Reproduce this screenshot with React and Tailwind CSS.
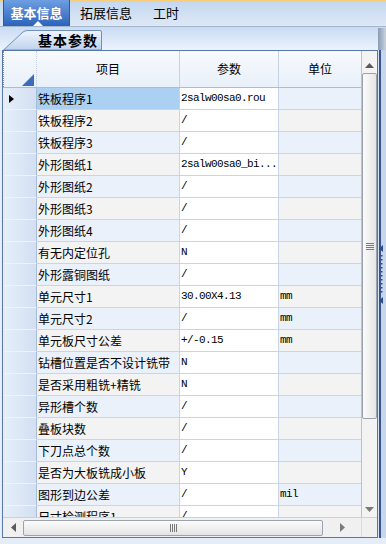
import React from "react";

const rows = [
  ["铁板程序1", "2salw00sa0.rou", ""],
  ["铁板程序2", "/", ""],
  ["铁板程序3", "/", ""],
  ["外形图纸1", "2salw00sa0_bi...", ""],
  ["外形图纸2", "/", ""],
  ["外形图纸3", "/", ""],
  ["外形图纸4", "/", ""],
  ["有无内定位孔", "N", ""],
  ["外形露铜图纸", "/", ""],
  ["单元尺寸1", "30.00X4.13", "mm"],
  ["单元尺寸2", "/", "mm"],
  ["单元板尺寸公差", "+/-0.15", "mm"],
  ["钻槽位置是否不设计铣带", "N", ""],
  ["是否采用粗铣+精铣", "N", ""],
  ["异形槽个数", "/", ""],
  ["叠板块数", "/", ""],
  ["下刀点总个数", "/", ""],
  ["是否为大板铣成小板", "Y", ""],
  ["图形到边公差", "/", "mil"],
  ["尺寸检测程序1", "/", ""],
];

const cjk = { fontFamily: '"Noto Sans CJK SC", "Noto Sans", sans-serif' };
const mono = { fontFamily: '"Liberation Mono", "Noto Sans CJK SC", monospace' };

export default function App() {
  return (
    <div
      className="w-[386px] h-[544px] bg-[#e4edf8] overflow-hidden flex flex-col text-[12px] text-black"
      style={cjk}
    >
      {/* Top tab bar */}
      <div className="h-[27px] flex items-stretch bg-gradient-to-b from-[#c3d7f0] to-[#dde8f5] border-b border-[#a3b6cd] relative">
        <div className="absolute left-0 right-0 top-0 h-[2px] bg-[#f7cf7c]" />
        <div className="relative ml-[3px] w-[67px] flex items-center justify-center bg-gradient-to-b from-[#6e9fe2] to-[#2c63b9] text-white font-bold text-[13px] border-x border-[#2a5aa8] z-10">
          基本信息
          <div className="absolute bottom-0 left-[29px] w-0 h-0 border-l-[5px] border-r-[5px] border-b-[5px] border-l-transparent border-r-transparent border-b-white" />
        </div>
        <div className="ml-[10px] flex items-center text-[13px]">拓展信息</div>
        <div className="ml-[21px] flex items-center text-[13px]">工时</div>
      </div>

      {/* Sub tab bar */}
      <div className="h-[23px] bg-gradient-to-b from-[#c9dbf3] to-[#ecf3fd] flex items-end relative">
        <div className="relative ml-[3px] w-[99px] h-[20px] flex items-center justify-end pr-[3px]">
          <svg className="absolute inset-0" width="99" height="20" viewBox="0 0 99 20">
            <defs>
              <linearGradient id="st" x1="0" y1="0" x2="0" y2="1">
                <stop offset="0" stopColor="#eef4fc" />
                <stop offset="1" stopColor="#bfd3ee" />
              </linearGradient>
            </defs>
            <path d="M0.5 20 L20 2 Q22 0.5 25 0.5 L97 0.5 Q98.5 0.5 98.5 2 L98.5 20 Z" fill="url(#st)" stroke="#6f8fbd" strokeWidth="1" />
          </svg>
          <span className="relative font-bold text-[14px] tracking-[1px] mr-[1px]">基本参数</span>
        </div>
        <div className="absolute right-0 top-[1px] bottom-0 w-[8px] bg-gradient-to-r from-[#8c9cb2] to-[#c9d3df]" />
      </div>

      {/* Grid + splitter */}
      <div className="flex h-[488px]">
        <div className="ml-[2px] w-[376px] border border-[#5677a8] flex flex-col bg-white">
          <div className="flex h-[466px]">
            {/* Table area */}
            <div className="w-[358px] overflow-hidden flex flex-col">
              {/* Header */}
              <div className="flex h-[37px] shrink-0 border-b border-[#a9bdd8] bg-gradient-to-b from-[#f7fafd] to-[#e9f0f9]">
                <div className="relative w-[34px] border-r border-[#c3d2e6] border-l border-l-[#7d8fa8] border-dotted">
                  <div className="absolute right-[2px] bottom-[1px] w-0 h-0 border-l-[11px] border-t-[11px] border-l-transparent border-t-transparent border-b-0 border-r-0" />
                  <svg className="absolute right-[2px] bottom-[1px]" width="12" height="12" viewBox="0 0 12 12">
                    <polygon points="12,0 12,12 0,12" fill="#3c6cbb" />
                  </svg>
                </div>
                <div className="w-[143px] border-r border-[#c3d2e6] flex items-center justify-center">项目</div>
                <div className="w-[99px] border-r border-[#c3d2e6] flex items-center justify-center">参数</div>
                <div className="w-[82px] flex items-center justify-center">单位</div>
              </div>
              {/* Rows */}
              {rows.map((r, i) => {
                const blue = i % 2 === 0;
                const sel = i === 0;
                return (
                  <div key={i} className="flex h-[22px] shrink-0">
                    <div className="relative w-[34px] shrink-0 border-b border-[#eef3fa] border-r border-r-[#a7bcd9] bg-gradient-to-r from-[#e6eef9] to-[#d3e0f2]">
                      {sel && (
                        <svg className="absolute left-[6px] top-[7px]" width="5" height="8" viewBox="0 0 5 8">
                          <polygon points="0,0 5,4 0,8" fill="#000" />
                        </svg>
                      )}
                    </div>
                    <div
                      className={`w-[143px] shrink-0 border-b border-r border-[#c6d5ea] flex items-center pl-[1px] whitespace-nowrap overflow-hidden ${
                        sel ? "bg-[#acd0f2]" : blue ? "bg-[#eaf1fb]" : "bg-[#f3f3f3]"
                      }`}
                    >
                      {r[0]}
                    </div>
                    <div
                      className="w-[99px] shrink-0 border-b border-r border-[#c6d5ea] bg-white flex items-center pl-[1px] whitespace-nowrap overflow-hidden text-[11px] tracking-[-0.6px]"
                      style={mono}
                    >
                      {r[1]}
                    </div>
                    <div
                      className={`w-[82px] shrink-0 border-b border-[#c6d5ea] flex items-center pl-[1px] text-[11px] tracking-[-0.6px] ${
                        blue ? "bg-[#eaf1fb]" : "bg-[#f3f3f3]"
                      }`}
                      style={mono}
                    >
                      {r[2]}
                    </div>
                  </div>
                );
              })}
            </div>
            {/* Vertical scrollbar */}
            <div className="w-[16px] border-l border-[#b8c3cf] bg-[#f3f3f3] flex flex-col items-stretch">
              <div className="h-[22px] flex items-end justify-center pb-[5px]">
                <svg width="9" height="5" viewBox="0 0 9 5">
                  <polygon points="4.5,0 9,5 0,5" fill="#5a5a5a" />
                </svg>
              </div>
              <div className="h-[346px] mx-[0px] border border-[#9aa3ad] rounded-[2px] bg-gradient-to-r from-[#fbfbfb] to-[#e6e6e6] flex items-center justify-center">
                <div className="flex flex-col gap-[1px]">
                  <div className="w-[8px] h-[1px] bg-[#7a7a7a]" />
                  <div className="w-[8px] h-[1px] bg-[#7a7a7a]" />
                  <div className="w-[8px] h-[1px] bg-[#7a7a7a]" />
                  <div className="w-[8px] h-[1px] bg-[#7a7a7a]" />
                </div>
              </div>
              <div className="flex-1 flex items-end justify-center pb-[5px]">
                <svg width="9" height="5" viewBox="0 0 9 5">
                  <polygon points="0,0 9,0 4.5,5" fill="#7a7a7a" />
                </svg>
              </div>
            </div>
          </div>
          {/* Horizontal scrollbar */}
          <div className="flex h-[20px] border-t border-[#c9d1da]">
            <div className="w-[358px] bg-[#f0f0f0] flex items-center">
              <div className="w-[20px] flex justify-center">
                <svg width="5" height="9" viewBox="0 0 5 9">
                  <polygon points="5,0 5,9 0,4.5" fill="#5a5a5a" />
                </svg>
              </div>
              <div className="w-[300px] h-[16px] border border-[#9aa3ad] rounded-[2px] bg-gradient-to-b from-[#fbfbfb] to-[#e4e4e4] flex items-center justify-center">
                <div className="flex gap-[1px]">
                  <div className="w-[1px] h-[8px] bg-[#7a7a7a]" />
                  <div className="w-[1px] h-[8px] bg-[#7a7a7a]" />
                  <div className="w-[1px] h-[8px] bg-[#7a7a7a]" />
                  <div className="w-[1px] h-[8px] bg-[#7a7a7a]" />
                </div>
              </div>
              <div className="flex-1 flex justify-center">
                <svg width="5" height="9" viewBox="0 0 5 9">
                  <polygon points="0,0 5,4.5 0,9" fill="#7a7a7a" />
                </svg>
              </div>
            </div>
            <div className="w-[16px] bg-[#f0f0f0] border-l border-[#dcdcdc]" />
          </div>
        </div>
        {/* Splitter */}
        <div className="w-[8px] flex bg-[#d8e4f3]">
          <div className="w-[1px] bg-[#d6e2f2]" />
          <div className="w-[2px] bg-[#37558a]" />
          <div className="relative w-[5px] bg-[#c7d6ea]">
            <svg className="absolute left-[-2px] top-[195px]" width="5" height="60" viewBox="0 0 5 60">
              <polygon points="4,0 4,7 0,3.5" fill="#2d4c82" />
              <rect x="2" y="10" width="1.5" height="1.5" fill="#2d4c82" />
              <rect x="2" y="14" width="1.5" height="1.5" fill="#2d4c82" />
              <rect x="2" y="18" width="1.5" height="1.5" fill="#2d4c82" />
              <rect x="2" y="22" width="1.5" height="1.5" fill="#2d4c82" />
              <rect x="2" y="26" width="1.5" height="1.5" fill="#2d4c82" />
              <rect x="2" y="30" width="1.5" height="1.5" fill="#2d4c82" />
              <rect x="2" y="34" width="1.5" height="1.5" fill="#2d4c82" />
              <rect x="2" y="38" width="1.5" height="1.5" fill="#2d4c82" />
              <rect x="2" y="42" width="1.5" height="1.5" fill="#2d4c82" />
              <rect x="2" y="46" width="1.5" height="1.5" fill="#2d4c82" />
              <polygon points="4,52 4,59 0,55.5" fill="#2d4c82" />
            </svg>
          </div>
        </div>
      </div>
      <div className="flex-1 bg-[#e4edf8]" />
    </div>
  );
}
